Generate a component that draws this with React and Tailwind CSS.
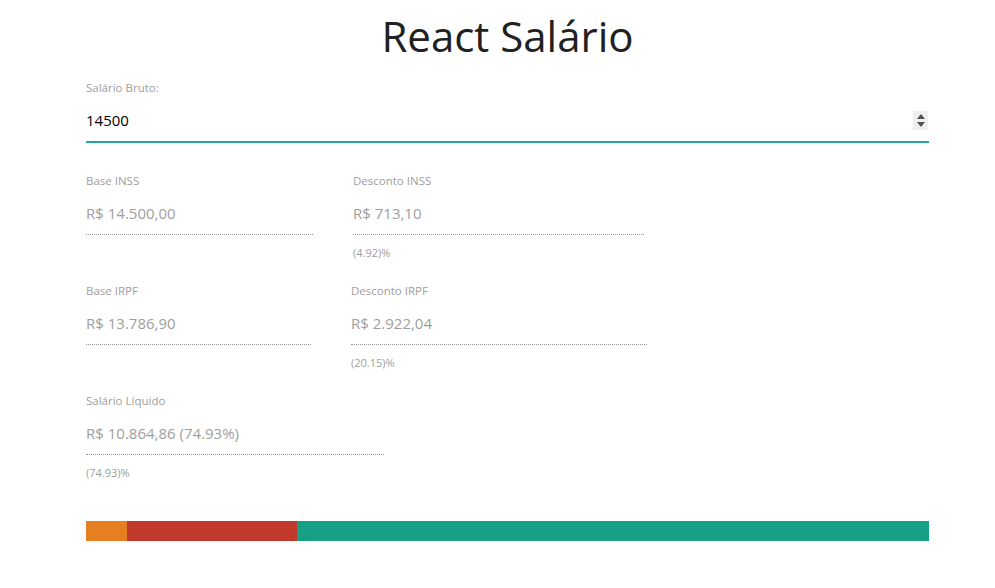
import React from "react";

const font = { fontFamily: '"Open Sans", "Noto Sans", sans-serif' };

function Field({ label, value, pct, width }) {
  return (
    <div className={width}>
      <div className="text-[11.5px] leading-4 text-[#9e9e9e]">{label}</div>
      <div className="h-[46px] pt-[2px] flex items-center border-b border-dotted border-[#9a9a9a] text-[15px] leading-6 text-[#9e9e9e]">
        {value}
      </div>
      {pct && <div className="mt-[10px] text-[11px] leading-4 text-[#9e9e9e]">{pct}</div>}
    </div>
  );
}

export default function App() {
  return (
    <div className="bg-white min-h-[588px] w-[995px]" style={font}>
      <div className="ml-[86px] w-[843px]">
        <h1 className="text-center text-[42px] leading-[72px] text-[#212121]">React Salário</h1>
        <div className="mt-2">
          <div className="text-[11.5px] leading-4 text-[#9e9e9e]">Salário Bruto:</div>
          <div className="h-[47px] pt-[3px] flex items-center justify-between border-b-2 border-[#26a69a]">
            <span className="text-[15px] leading-6 text-black">14500</span>
            <div className="w-[15px] h-[19px] bg-[#efefef] flex flex-col items-center justify-center gap-[3px] mr-[1px]">
              <div className="w-0 h-0 border-l-[4px] border-r-[4px] border-b-[5px] border-l-transparent border-r-transparent border-b-[#505050]" />
              <div className="w-0 h-0 border-l-[4px] border-r-[4px] border-t-[5px] border-l-transparent border-r-transparent border-t-[#505050]" />
            </div>
          </div>
        </div>
        <div className="mt-[30px] flex items-start gap-10">
          <Field label="Base INSS" value="R$ 14.500,00" width="w-[227px]" />
          <Field label="Desconto INSS" value="R$ 713,10" pct="(4.92)%" width="w-[291px]" />
        </div>
        <div className="mt-[22px] flex items-start gap-10">
          <Field label="Base IRPF" value="R$ 13.786,90" width="w-[225px]" />
          <Field label="Desconto IRPF" value="R$ 2.922,04" pct="(20.15)%" width="w-[296px]" />
        </div>
        <div className="mt-[22px] flex items-start">
          <Field label="Salário Líquido" value="R$ 10.864,86 (74.93%)" pct="(74.93)%" width="w-[298px]" />
        </div>
        <div className="mt-[40px] flex h-5 w-full">
          <div className="h-full bg-[#e67e22]" style={{ width: "4.92%" }} />
          <div className="h-full bg-[#c0392b]" style={{ width: "20.15%" }} />
          <div className="h-full bg-[#16a085]" style={{ width: "74.93%" }} />
        </div>
      </div>
    </div>
  );
}
